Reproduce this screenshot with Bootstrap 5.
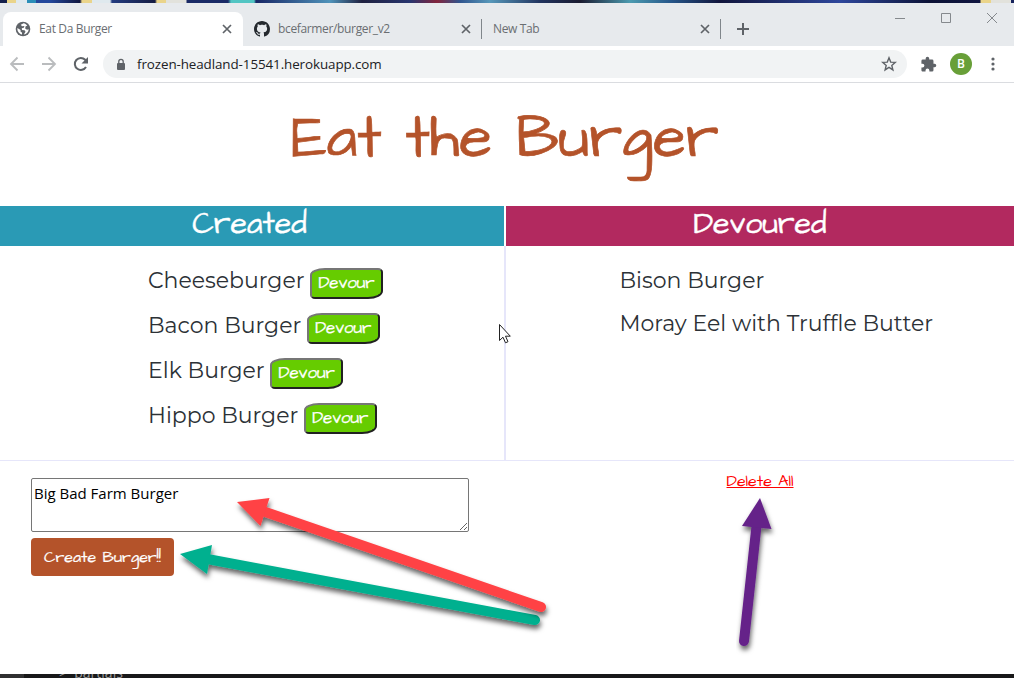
<!DOCTYPE html>
<html lang="en">
<head>
<meta charset="utf-8">
<meta name="viewport" content="width=device-width, initial-scale=1">
<title>Eat Da Burger</title>
<link href="https://cdn.jsdelivr.net/npm/bootstrap@5.3.0/dist/css/bootstrap.min.css" rel="stylesheet">
<script src="https://cdn.jsdelivr.net/npm/bootstrap@5.3.0/dist/js/bootstrap.bundle.min.js" defer></script>
<style>
:root{--hand:"Architects Daughter","Lato",sans-serif;--ui:"Segoe UI","Open Sans","Noto Sans",sans-serif}
body{width:1014px;height:678px;overflow:hidden;font-family:var(--ui);background:#fff}
svg{display:block;flex:none}
.desk-top{height:3px;background:linear-gradient(90deg,#14204c 0 7px,#ead48a 7px 16px,#dfe9ee 16px 27px,#2b8eb8 27px 36px,#24489c 36px 50px,#10163f 80px,#ead48a 82px 92px,#dfe9ee 92px 110px,#233c80 112px,#141b42 155px,#ead48a 157px 166px,#e2e2dc 166px 186px,#1a2a66 187px 228px,#52c5c3 231px 254px,#182766 256px,#4f93ba 330px,#1f2140 362px,#27356f 410px,#82243c 437px,#30558e 460px,#5798ba 490px,#21345f 540px,#1a1b30 580px,#4c9bb0 630px,#27588b 670px,#11153c 720px,#2e479c 840px,#0c1236 930px,#101640 980px,#ead48a 981px 991px,#e2e2dc 991px 1011px,#16235c 1011px)}
.tab-strip{height:43px;background:#e7eaed;font-size:12px;letter-spacing:-.35px;color:#6a6e72}
.tab-on{width:240px;height:34px;margin:9px 0 0 3px;padding-left:12px;background:#fff;border-radius:8px 8px 0 0}
.tab-off{height:34px;margin-top:9px}
.tab-wide{width:238px;padding-left:11px}
.tab-icon{margin-right:8px}
.tab-div{width:1px;height:20px;background:#80868b;margin-top:16px}
.tool-row{height:37px;border-bottom:1px solid #dadce0}
.omni{margin-left:12px;width:804px;height:28px;border-radius:14px;background:#f1f3f4;font-size:13.4px;letter-spacing:-.09px;color:#202124}
.avatar{width:22px;height:22px;background:#689f38;color:#fff;font:500 12px Roboto,sans-serif}
.page-area{height:591px}
.hero{height:123px;padding-top:16px;color:#b4532a}
.hero h1{font:400 60px/80px var(--hand);padding-right:4px;-webkit-text-stroke:.7px #b4532a}
.col-l{width:504px}.col-r{width:510px}
.boards{height:255px;border-bottom:1px solid #e6e6fa}
.head{height:40px;color:#fff;font:400 30.4px/36px var(--hand);margin:0;-webkit-text-stroke:.4px #fff}
.head-c{background:#2a9ab5;padding-right:5px}
.head-d{background:#b2295f}
.body-line{height:214px}
.body-r{border-left:2px solid #e6e6fa}
.head-r{border-left:2px solid #fff}
.foods{font:400 22px/27px "Montserrat","Lato",sans-serif;color:#2c3136;white-space:nowrap}
.foods-l{padding:14px 0 0 148px}
.foods-l li{height:45px}
.foods-l span,.foods-r li{padding-top:7px}
.foods-r{padding:14px 0 0 113.5px}
.foods-r li{height:43px}
.eat{width:73px;height:31px;border:2px solid;border-color:#767676 #212121 #212121 #767676;border-radius:15px 5px 15px 5px/7px 4px 8px 4px;background:#6c0;color:#fff;font:400 16.9px/26px var(--hand);-webkit-text-stroke:.25px #fff;padding:0;margin:7.500px 0 0 5.500px}
.entry{width:438px;height:54px;margin:17px 0 0 31px;padding:4px 2px;border:1px solid #767676;border-radius:2px;font:15px/21px var(--ui);color:#000;resize:both;display:block;outline:0}
.make{width:143px;height:38px;margin:6px 0 0 31px;border:0;border-radius:4px;background:#b4532a;color:#fff;font:400 16px/36px var(--hand);-webkit-text-stroke:.2px #fff;padding:0}
.wipe{color:red;font:400 16px/20px var(--hand);margin:10px 0 0 222.5px;display:inline-block}
.wipe:hover{color:red}
.desk-low{height:4px;background:linear-gradient(90deg,#303031 0 24px,#181819 24px)}
.desk-low span{margin-left:59px;font:14px/18px var(--ui);color:#9a9a9a;margin-top:-10px;white-space:pre}
.over{left:0;top:0;pointer-events:none}
</style>
</head>
<body class="d-flex flex-column position-relative">
<div class="desk-top flex-shrink-0"></div>
<div class="tab-strip d-flex flex-shrink-0">
  <div class="tab-on d-flex align-items-center">
    <svg class="tab-icon" width="16" height="16" viewBox="0 0 16 16"><circle cx="8" cy="8" r="7.3" fill="#5f6368"/><path d="M8.600 2.200 5.800 3.800 7 5.300 9.400 5l-.6 1.800-2 .5L7 9l2.600.3.9 1.500-1.700 2.800c2.800-.4 4.800-2.600 4.900-5.400l-1.700.5-1.800-1.200.3-2 1.800-.9C11.200 3.200 10 2.400 8.600 2.200ZM2.400 7c-.4 3 1.600 5.800 4.500 6.500l.2-1.700-1.600-1.300.1-1.500z" fill="#fff"/></svg>
    <span>Eat Da Burger</span>
    <svg class="ms-auto me-2" width="16" height="16" viewBox="0 0 16 16"><path d="m4 4 8 8m0-8-8 8" stroke="#5f6368" stroke-width="1.700"/></svg>
  </div>
  <div class="tab-off tab-wide d-flex align-items-center">
    <svg class="tab-icon" width="16" height="16" viewBox="0 0 16 16"><path fill="#24292e" d="M8 0C3.580 0 0 3.580 0 8c0 3.540 2.290 6.530 5.470 7.590.4.070.55-.17.55-.38 0-.19-.01-.82-.01-1.490-2.010.37-2.530-.49-2.690-.94-.09-.23-.48-.94-.82-1.130-.28-.15-.68-.52-.01-.53.63-.01 1.080.58 1.230.82.72 1.210 1.870.87 2.330.66.07-.52.28-.87.51-1.070-1.780-.2-3.640-.89-3.640-3.950 0-.87.31-1.590.82-2.150-.08-.2-.36-1.020.08-2.120 0 0 .67-.21 2.200.82.64-.18 1.320-.27 2-.27s1.360.09 2 .27c1.530-1.040 2.200-.82 2.200-.82.44 1.100.16 1.920.08 2.120.51.56.82 1.270.82 2.150 0 3.070-1.870 3.750-3.650 3.950.29.25.54.73.54 1.480 0 1.070-.01 1.930-.01 2.200 0 .21.15.46.55.38A8.010 8.010 0 0 0 16 8c0-4.420-3.580-8-8-8"/></svg>
    <span>bcefarmer/burger_v2</span>
    <svg class="ms-auto" style="margin-right:7px" width="16" height="16" viewBox="0 0 16 16"><path d="m4 4 8 8m0-8-8 8" stroke="#5f6368" stroke-width="1.700"/></svg>
  </div>
  <div class="tab-div"></div>
  <div class="tab-off tab-wide d-flex align-items-center">
    <span>New Tab</span>
    <svg class="ms-auto" style="margin-right:7px" width="16" height="16" viewBox="0 0 16 16"><path d="m4 4 8 8m0-8-8 8" stroke="#5f6368" stroke-width="1.700"/></svg>
  </div>
  <div class="tab-div"></div>
  <div class="tab-off d-flex align-items-center" style="padding-left:15px"><svg width="14" height="14" viewBox="0 0 14 14"><path d="M7 1v12M1 7h12" stroke="#5f6368" stroke-width="2"/></svg></div>
  <svg class="ms-auto" width="122" height="30" viewBox="0 0 122 30" fill="none" stroke="#85898d"><path d="M3 15.500h10M95 10l10 10m0-10-10 10"/><path d="M49.500 10.500h9v9h-9z"/></svg>
</div>
<div class="tool-row d-flex align-items-center flex-shrink-0">
  <svg width="91" height="36" viewBox="0 0 91 36" fill="none" stroke-width="1.800"><path d="M24 18H11m6.500-6.500L11 18l6.500 6.500M42 18h13m-6.500-6.500L55 18l-6.500 6.500" stroke="#babcbe"/><path d="M86 21a6 6 0 1 1-.8-7.200L87 16" stroke="#5f6368" stroke-width="2"/><path d="M88 11v6.500h-6.500z" fill="#5f6368"/></svg>
  <div class="omni d-flex align-items-center">
    <svg style="margin-left:13px" width="10" height="13" viewBox="0 0 10 13"><rect x="1" y="5" width="8" height="7" rx="1" fill="#5f6368"/><path d="M2.800 5.500V3.500a2.200 2.200 0 0 1 4.400 0v2" fill="none" stroke="#5f6368" stroke-width="1.300"/></svg>
    <span style="margin-left:11px">frozen-headland-15541.herokuapp.com</span>
    <svg class="ms-auto" style="margin-right:10px" width="16" height="16" viewBox="0 0 16 16"><path d="m8 1.800 1.700 4.300 4.600.3-3.500 3 1.100 4.500L8 11.400l-3.900 2.500 1.100-4.500-3.500-3 4.600-.3z" fill="none" stroke="#5f6368" stroke-width="1.400"/></svg>
  </div>
  <svg style="margin-left:13px" width="17" height="17" viewBox="0 0 24 24"><path fill="#5f6368" d="M20.500 11H19V7a2 2 0 0 0-2-2h-4V3.500a2.500 2.500 0 0 0-5 0V5H4a2 2 0 0 0-2 2v3.800h1.500a2.700 2.700 0 0 1 0 5.400H2V20c0 1.100.9 2 2 2h3.800v-1.500a2.700 2.700 0 0 1 5.400 0V22H17a2 2 0 0 0 2-2v-4h1.500a2.500 2.500 0 0 0 0-5"/></svg>
  <div class="avatar rounded-circle d-flex align-items-center justify-content-center" style="margin-left:13px">B</div>
  <svg style="margin-left:19px" width="4" height="14" viewBox="0 0 4 14" fill="#5f6368"><circle cx="2" cy="2" r="1.600"/><circle cx="2" cy="7" r="1.600"/><circle cx="2" cy="12" r="1.600"/></svg>
</div>
<main class="page-area flex-shrink-0">
  <header class="hero text-center"><h1 class="m-0">Eat the Burger</h1></header>
  <section class="boards d-flex">
    <div class="col-l">
      <h2 class="head head-c text-center">Created</h2>
      <ul class="foods foods-l list-unstyled m-0">
        <li class="d-flex"><span>Cheeseburger</span><button class="eat">Devour</button></li>
        <li class="d-flex"><span>Bacon Burger</span><button class="eat">Devour</button></li>
        <li class="d-flex"><span>Elk Burger</span><button class="eat">Devour</button></li>
        <li class="d-flex"><span>Hippo Burger</span><button class="eat">Devour</button></li>
      </ul>
    </div>
    <div class="col-r">
      <div class="head-r"><h2 class="head head-d text-center">Devoured</h2></div>
      <div class="body-line body-r"><ul class="foods foods-r list-unstyled m-0"><li>Bison Burger</li><li>Moray Eel with Truffle Butter</li></ul></div>
    </div>
  </section>
  <section class="d-flex">
    <div class="col-l"><textarea class="entry" spellcheck="false">Big Bad Farm Burger</textarea><button class="make">Create Burger!!</button></div>
    <div class="col-r"><a class="wipe" href="#">Delete All</a></div>
  </section>
</main>
<footer class="desk-low d-flex overflow-hidden flex-shrink-0"><span>&gt;  partials</span></footer>
<svg class="over position-absolute" width="1014" height="678" viewBox="0 0 1014 678">
  <defs><filter id="sh" x="-20%" y="-20%" width="140%" height="150%"><feDropShadow dx="1" dy="4" stdDeviation="2.500" flood-color="#000" flood-opacity=".6"/></filter></defs>
  <g filter="url(#sh)" fill="#06b08f"><path d="M210 559.500 535 620" stroke="#06b08f" stroke-width="10" stroke-linecap="round"/><path d="m180 554 32-9-5 29z"/></g>
  <g filter="url(#sh)" fill="#ff4245"><path d="M264 511.500 541 607" stroke="#ff4245" stroke-width="10" stroke-linecap="round"/><path d="m237 502 32.500-4-9 28z"/></g>
  <g filter="url(#sh)" fill="#652189"><path d="M756.500 526 744 641" stroke="#652189" stroke-width="10" stroke-linecap="round"/><path d="m760 498-18 28 29.500 3z"/></g>
  <path d="M499.500 324.500v16l3.500-3.300 2.500 5.600 2.500-1.100-2.500-5.500h4.800z" fill="#fff" stroke="#222"/>
</svg>
</body>
</html>
